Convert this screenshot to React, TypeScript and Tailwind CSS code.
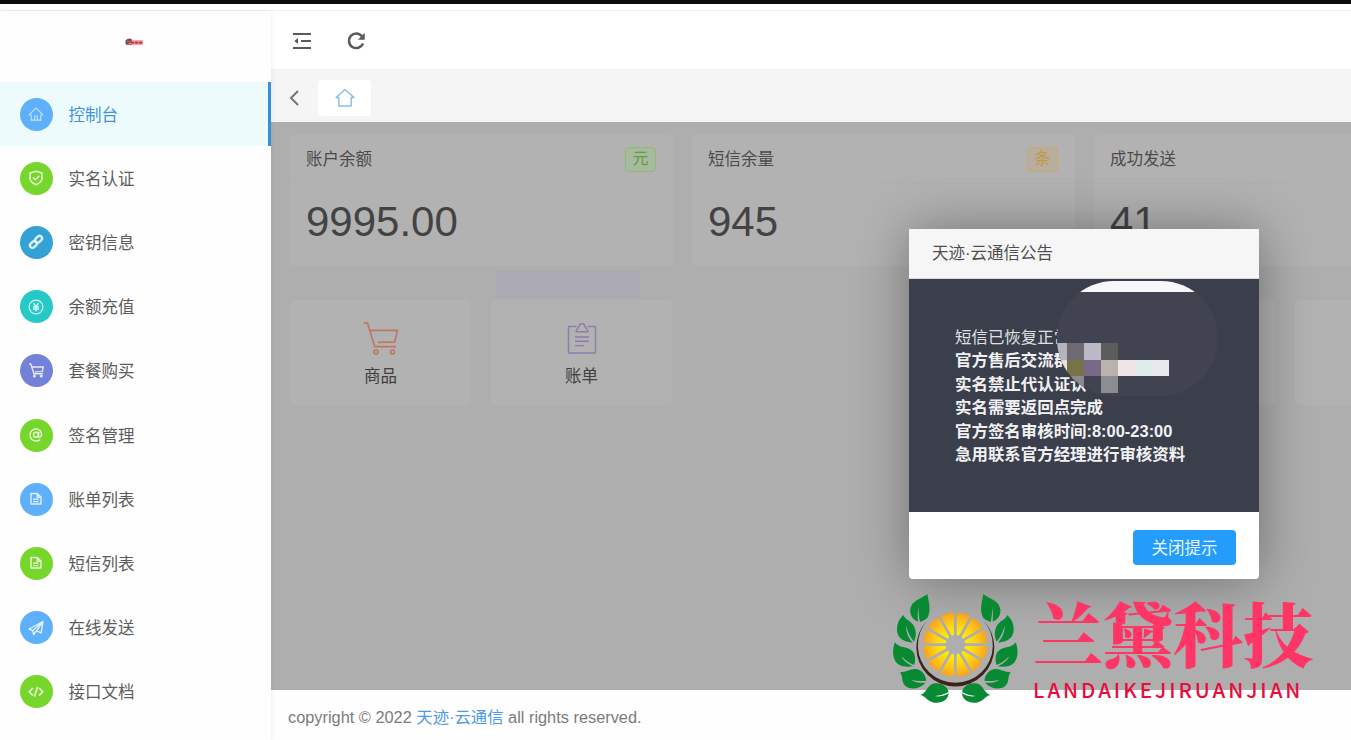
import type { ReactNode } from "react";
import { AiOutlineHome } from "react-icons/ai";

const CheckShield = () => (
  <svg viewBox="0 0 16 16" className="size-4" fill="none" stroke="currentColor" strokeWidth="1.5" strokeLinejoin="round">
    <path d="M8 1.3 14 3v5.2c0 3-2.5 5-6 6.5-3.500-1.500-6-3.500-6-6.5V3Z" />
    <path d="m5 7.500 2.300 2.300 3.900-3.900" />
  </svg>
);

const Chain = () => (
  <svg viewBox="0 0 16 16" className="size-4" fill="none" stroke="currentColor" strokeWidth="2.4">
    <rect x="6.800" y="2.800" width="7.600" height="5" rx="2.5" transform="rotate(-45 10.600 5.300)" />
    <rect x="1.600" y="8" width="7.600" height="5" rx="2.5" transform="rotate(-45 5.400 10.500)" />
  </svg>
);

const Yen = () => (
  <svg viewBox="0 0 16 16" className="size-4" fill="none" stroke="currentColor" strokeWidth="1.2">
    <circle cx="8" cy="8" r="6.9" />
    <path strokeWidth="1.500" d="m5.5 4.2 2.5 3.400 2.500-3.400M8 7.600v4.600M5 7.900h6M5 10h6" />
  </svg>
);

const Cart = ({ className }: { className: string }) => (
  <svg viewBox="0 0 36 36" className={className} fill="none" stroke="currentColor" strokeWidth="1.7" strokeLinejoin="round" strokeLinecap="round">
    <path d="M1.5 2.2h3l7.3 23.5h20.5M6.8 9.4h27.7l-2.8 11.4-16.2.6" />
    <circle cx="13" cy="31" r="2" />
    <circle cx="29.5" cy="31" r="2" />
  </svg>
);

const At = () => (
  <svg viewBox="0 0 16 16" className="size-4" fill="none" stroke="currentColor" strokeWidth="1.4" strokeLinecap="round">
    <circle cx="8" cy="7.8" r="2.5" />
    <path d="M10.800 5.300 10.300 9c-.1 2 2.800 1.500 3.200-1.100C13.800 4.500 11.500 2 8 2 4.500 2 2 4.600 2 8s2.500 6 6 6c1.600 0 2.800-.4 3.800-1.100" />
  </svg>
);

const Doc = () => (
  <svg viewBox="0 0 16 16" className="size-4" fill="none" stroke="currentColor" strokeWidth="1.4" strokeLinejoin="round">
    <path d="M3 2.500h6.200l3.800 3.600v6.900H3ZM9.200 2.700v3.600h3.600M5.200 8.300h5.400M5.200 10.600h5.400" />
  </svg>
);

const Plane = () => (
  <svg viewBox="0 0 16 16" className="size-4" fill="none" stroke="currentColor" strokeWidth="1.4" strokeLinejoin="round">
    <path d="M15 1.500 1 9l3.800 1.600L15 1.500l-1.800 11.300-4.700-2L15 1.500M4.800 10.600 5.600 14.500l2.900-3.700" />
  </svg>
);

const Code = () => (
  <svg viewBox="0 0 16 16" className="size-4" fill="none" stroke="currentColor" strokeWidth="1.700" strokeLinecap="round" strokeLinejoin="round">
    <path d="M4.500 4.500 1.200 7.800l3.300 3.300M11.500 4.500l3.300 3.300-3.300 3.300M9.300 3.600l-2.600 8.400" />
  </svg>
);

const Clipboard = () => (
  <svg viewBox="0 0 30 34" className="h-[34px] w-[30px]" fill="none" stroke="currentColor" strokeWidth="1.400" strokeLinejoin="round">
    <path d="M9.500 4.500H1.500v26.500h27V4.500h-8" />
    <path d="M12.200 4.200C12.500.8 17.500.8 17.800 4.200c.4 1.600 3 2.600 3.200 5.600H9c.2-3 2.800-4 3.200-5.600ZM8 15h14M8 19.300h14M8 23.600h9" />
  </svg>
);

const nav: { label: string; color: string; icon: ReactNode }[] = [
  { label: "控制台", color: "bg-[#5fb0fb]", icon: <AiOutlineHome className="size-4 opacity-80" /> },
  { label: "实名认证", color: "bg-[#76d62b]", icon: <CheckShield /> },
  { label: "密钥信息", color: "bg-[#32a2d6]", icon: <Chain /> },
  { label: "余额充值", color: "bg-[#26c9c6]", icon: <Yen /> },
  { label: "套餐购买", color: "bg-[#7481d8]", icon: <Cart className="size-[15px] [stroke-width:3.400]" /> },
  { label: "签名管理", color: "bg-[#76d62b]", icon: <At /> },
  { label: "账单列表", color: "bg-[#5fb0fb]", icon: <Doc /> },
  { label: "短信列表", color: "bg-[#76d62b]", icon: <Doc /> },
  { label: "在线发送", color: "bg-[#5fb0fb]", icon: <Plane /> },
  { label: "接口文档", color: "bg-[#76d62b]", icon: <Code /> },
];

function Sidebar() {
  return (
    <aside className="z-10 flex w-[271px] shrink-0 flex-col bg-[#fefefe] shadow-[1px_0_4px_rgba(0,0,0,0.06)]">
      <div className="flex h-[71px] items-center justify-center pb-[10px] pr-1">
        <svg viewBox="0 0 20 10" className="h-[10px] w-5">
          <rect x="5" y="3.300" width="14" height="4.500" rx="1" fill="#f28a94" />
          <path d="M1.500 3.500Q4 .5 8 2.200l-.5 2.500-5 3.500Q.8 6 1.500 3.500Z" fill="#6b5557" />
          <path d="M7 5.600h11" stroke="#c5303e" strokeWidth="1.800" strokeDasharray="3 1" />
          <path d="M3 4.500h3M3 7.500h5" stroke="#e4505c" />
        </svg>
      </div>
      <nav className="flex flex-col">
        {nav.map((n, i) => (
          <a
            key={n.label}
            className={
              i === 0
                ? "flex h-[64.2px] items-center gap-4 border-r-[3px] border-[#3b8ede] bg-[#eefbfd] pl-[19.500px] text-[#4292dd]"
                : "flex h-[64.2px] items-center gap-4 pl-[19.500px] text-[#5c5c5c]"
            }
          >
            <span className={`flex size-[33px] items-center justify-center rounded-full text-white/80 ${n.color}`}>{n.icon}</span>
            <span className="pt-px text-[16.5px] leading-6">{n.label}</span>
          </a>
        ))}
      </nav>
    </aside>
  );
}

function StatCard({ title, value, tag }: { title: string; value: string; tag?: ReactNode }) {
  return (
    <section className="h-[131px] w-[383px] shrink-0 rounded-sm bg-[#b3b2b3]">
      <div className="flex h-[49px] items-center justify-between border-b border-[#afaeb0] pl-4 pr-[17px]">
        <h2 className="text-[16.5px] text-[#4b4b4c]">{title}</h2>
        {tag}
      </div>
      <p className="pl-4 pt-[13px] text-[42px] leading-[50px] text-[#434344]">{value}</p>
    </section>
  );
}

function Shortcut({ icon, label }: { icon?: ReactNode; label?: string }) {
  return (
    <div className="flex h-[105px] w-[181px] shrink-0 flex-col items-center rounded-sm bg-[#b2b2b3] pt-[21px] text-[16.5px] text-[#3f3f40]">
      {icon}
      <span className="mt-1 leading-[30px]">{label}</span>
    </div>
  );
}

const mosaic = [
  [0, 62, 10, 16.500, "#b5b3bf"],
  [10, 62, 17, 16.500, "#6d6a73"],
  [27, 62, 17, 16.500, "#bbb9c6"],
  [44, 62, 17, 16.500, "#5d5c5c"],
  [0, 78.500, 10.500, 16.500, "#e8dfe5"],
  [10, 78.500, 17, 16.500, "#777346"],
  [27, 78.500, 17, 16.500, "#786987"],
  [44, 78.500, 17, 16.500, "#bab2ac"],
  [61, 78.500, 17, 16.500, "#f0e5e4"],
  [78, 78.500, 17, 16.500, "#dfece9"],
  [95, 78.500, 17, 16.500, "#e6eaee"],
  [10, 95, 17, 16.500, "#898993"],
  [44, 95, 17, 16.500, "#8c8d92"],
] as const;

function NoticeDialog() {
  return (
    <div className="absolute left-[909px] top-[229px] z-20 flex h-[350px] w-[350px] flex-col rounded-sm bg-white shadow-[1px_1px_54px_rgba(0,0,0,0.36)]">
      <header className="flex h-[50px] items-center border-b border-[#d8d8da] bg-[#f6f6f6] pl-[23px] text-[16.500px] text-[#4f4f4f]">
        天迹·云通信公告
      </header>
      <div className="relative h-[233px] bg-[#3b3e4b] pl-[46px] pt-[47px] text-[16.450px] font-bold leading-[23.400px] text-[#f1f1f4]">
        <p className="font-normal text-[#dfe0e4]">短信已恢复正常</p>
        <p>官方售后交流群</p>
        <p>实名禁止代认证认</p>
        <p>实名需要返回点完成</p>
        <p>官方签名审核时间:8:00-23:00</p>
        <p>急用联系官方经理进行审核资料</p>
        <div className="absolute left-[148px] top-0.5 h-[115px] w-[161px] overflow-hidden rounded-[57px] bg-[#414351]">
          <svg viewBox="0 0 161 115" className="h-[115px] w-[161px]" shapeRendering="crispEdges">
            <rect width="161" height="11" fill="#f7f7fb" />
            {mosaic.map(([x, y, w, h, c], i) => (
              <rect key={i} x={x} y={y} width={w} height={h} fill={c} />
            ))}
          </svg>
        </div>
      </div>
      <footer className="flex flex-1 items-center justify-end pr-[23px] pt-[3px]">
        <button className="h-[35px] w-[103px] rounded-sm bg-[#239cfb] pt-0.5 text-[16.500px] text-[#e6f5ff]">关闭提示</button>
      </footer>
    </div>
  );
}

const leaves = [
  "M127 27C115 39 79 45 76 73C74 91 84 104 99 110C98 96 97 82 101 66C100 84 102 98 105 111C117 106 127 102 130 92C138 72 131 50 127 27Z",
  "M55 90C42 103 36 116 36 132C35 155 50 170 83 173C72 160 63 145 63 123C68 141 76 157 87 170C93 157 95 141 88 125C80 108 61 105 55 90Z",
  "M30 172C22 192 22 216 33 231C44 246 64 246 84 244C67 236 56 228 49 214C61 226 73 235 88 240C92 221 91 206 81 197C65 184 42 190 30 172Z",
  "M45 262C56 275 47 291 62 304C80 317 106 310 122 293C105 295 92 292 78 284C93 288 107 289 124 287C121 269 112 257 96 253C79 249 62 263 45 262Z",
  "M106 330C122 333 126 349 148 353C170 356 190 345 191 325C178 333 165 336 149 333C165 332 178 328 191 321C187 302 167 293 149 295C127 298 124 326 106 330Z",
];

function Watermark() {
  return (
    <div className="absolute left-[885px] top-[585px] z-30 flex">
      <svg viewBox="0 0 420 375" className="h-[125px] w-[140px] shrink-0">
        <defs>
          <radialGradient id="citrus" gradientUnits="userSpaceOnUse" cx="0" cy="0" r="98">
            <stop offset="0.250" stopColor="#fff200" />
            <stop offset="0.600" stopColor="#ffd414" />
            <stop offset="1" stopColor="#f8a01f" />
          </radialGradient>
        </defs>
        <g fill="#078a32">
          {leaves.map((d) => <path key={d} d={d} />)}
          <g transform="matrix(-1 0 0 1 422 0)">
            {leaves.map((d) => <path key={d} d={d} />)}
          </g>
        </g>
        <path d="M128 105A117 117 0 1 0 294 105A112.500 112.500 0 1 1 128 105Z" fill="#3b2318" />
        <g transform="translate(211 179)" fill="url(#citrus)" stroke="url(#citrus)" strokeWidth="9" strokeLinejoin="round">
          {[15, 45, 75, 105, 135, 165, 195, 225, 255, 285, 315, 345].map((a) => (
            <path key={a} d="M33 0 91 -15.500Q94 0 91 15.500Z" transform={`rotate(${a})`} />
          ))}
        </g>
      </svg>
      <div className="ml-[8px] whitespace-nowrap pt-[5px]">
        <p className="font-['Noto_Serif_CJK_SC','Noto_Sans_CJK_SC',serif] text-[70px] font-black leading-[84px] text-[#ff3566]">兰黛科技</p>
        <p className="font-['Noto_Sans_CJK_SC',sans-serif] text-[20.500px] font-medium leading-[30px] tracking-[2.950px] text-[#e80d3a]">LANDAIKEJIRUANJIAN</p>
      </div>
    </div>
  );
}

export default function App() {
  return (
    <div className="relative flex h-[740px] w-[1351px] flex-col overflow-hidden bg-white font-['Liberation_Sans','Noto_Sans_CJK_SC',sans-serif]">
      <div className="h-1 shrink-0 bg-[#0b0b0b]" />
      <div className="h-[7px] shrink-0 border-b border-[#f1f1f3] bg-white" />
      <div className="flex min-h-0 flex-1">
        <Sidebar />
        <div className="flex min-w-0 flex-1 flex-col">
          <header className="flex h-[59px] shrink-0 items-center gap-[34px] border-b border-[#eeeeee] pl-[21px] pt-px text-[#5a5a5a]">
            <svg viewBox="0 0 20 18" className="h-[18px] w-5" fill="none" stroke="currentColor" strokeWidth="2">
              <path d="M1 2h18M9 9H19M1 16h18" />
              <path d="M6 6v6L2.300 9Z" fill="currentColor" stroke="none" />
            </svg>
            <svg viewBox="0 0 20 20" className="size-5" fill="none" stroke="currentColor" strokeWidth="2.500">
              <path d="M16 5.300A7.300 7.300 0 1 0 17 12.500" />
              <path d="M18.700 1.800v7h-6.700Z" fill="currentColor" stroke="none" />
            </svg>
          </header>
          <div className="flex h-[52px] shrink-0 items-center bg-[#f5f5f5] pl-[17px] pt-1">
            <svg viewBox="0 0 12 16" className="h-4 w-3" fill="none" stroke="#757575" strokeWidth="2">
              <path d="M10 1 3 8l7 7" />
            </svg>
            <div className="ml-[18px] flex h-9 w-[53px] items-center justify-center rounded bg-white">
              <svg viewBox="0 0 20 20" className="size-5" fill="none" stroke="#86bde9" strokeWidth="1.400" strokeLinejoin="round">
                <path d="M1 9.500 10 1.500l9 8h-2.800V18H3.800V9.500Z" />
              </svg>
            </div>
          </div>
          <main className="flex min-h-0 flex-1 flex-col overflow-hidden bg-[#aeaeaf] pl-[19px] pt-[13px]">
            <div className="flex gap-[19px]">
              <StatCard
                title="账户余额"
                value="9995.00"
                tag={<span className="flex h-[25px] w-[31px] items-center justify-center rounded-sm border border-[#8dbb71] bg-[#a9b99f] text-[16px] text-[#5d9f3e]">元</span>}
              />
              <StatCard
                title="短信余量"
                value="945"
                tag={<span className="flex h-[25px] w-[31px] items-center justify-center rounded-sm border border-[#c7aa72] bg-[#b7ae9f] text-[16px] text-[#c3983d]">条</span>}
              />
              <StatCard title="成功发送" value="41" />
            </div>
            <div className="h-[34px] pl-[206px] pt-1">
              <div className="h-7 w-[144px] bg-[#abaab3]" />
            </div>
            <div className="flex gap-5">
              <Shortcut icon={<Cart className="size-[36px] text-[#bd7864]" />} label="商品" />
              <Shortcut icon={<span className="flex h-9 items-center text-[#8d7daa]"><Clipboard /></span>} label="账单" />
              <div className="w-[382px] shrink-0" />
              <Shortcut />
              <Shortcut />
            </div>
          </main>
          <footer className="flex h-[50px] shrink-0 items-center bg-[#fefefe] pl-[17px] pt-1 text-[16.350px] text-[#7b7b7b]">
            <p>
              copyright © 2022 <a className="text-[#4f9ae6]">天迹·云通信</a> all rights reserved.
            </p>
          </footer>
        </div>
      </div>
      <NoticeDialog />
      <Watermark />
    </div>
  );
}
